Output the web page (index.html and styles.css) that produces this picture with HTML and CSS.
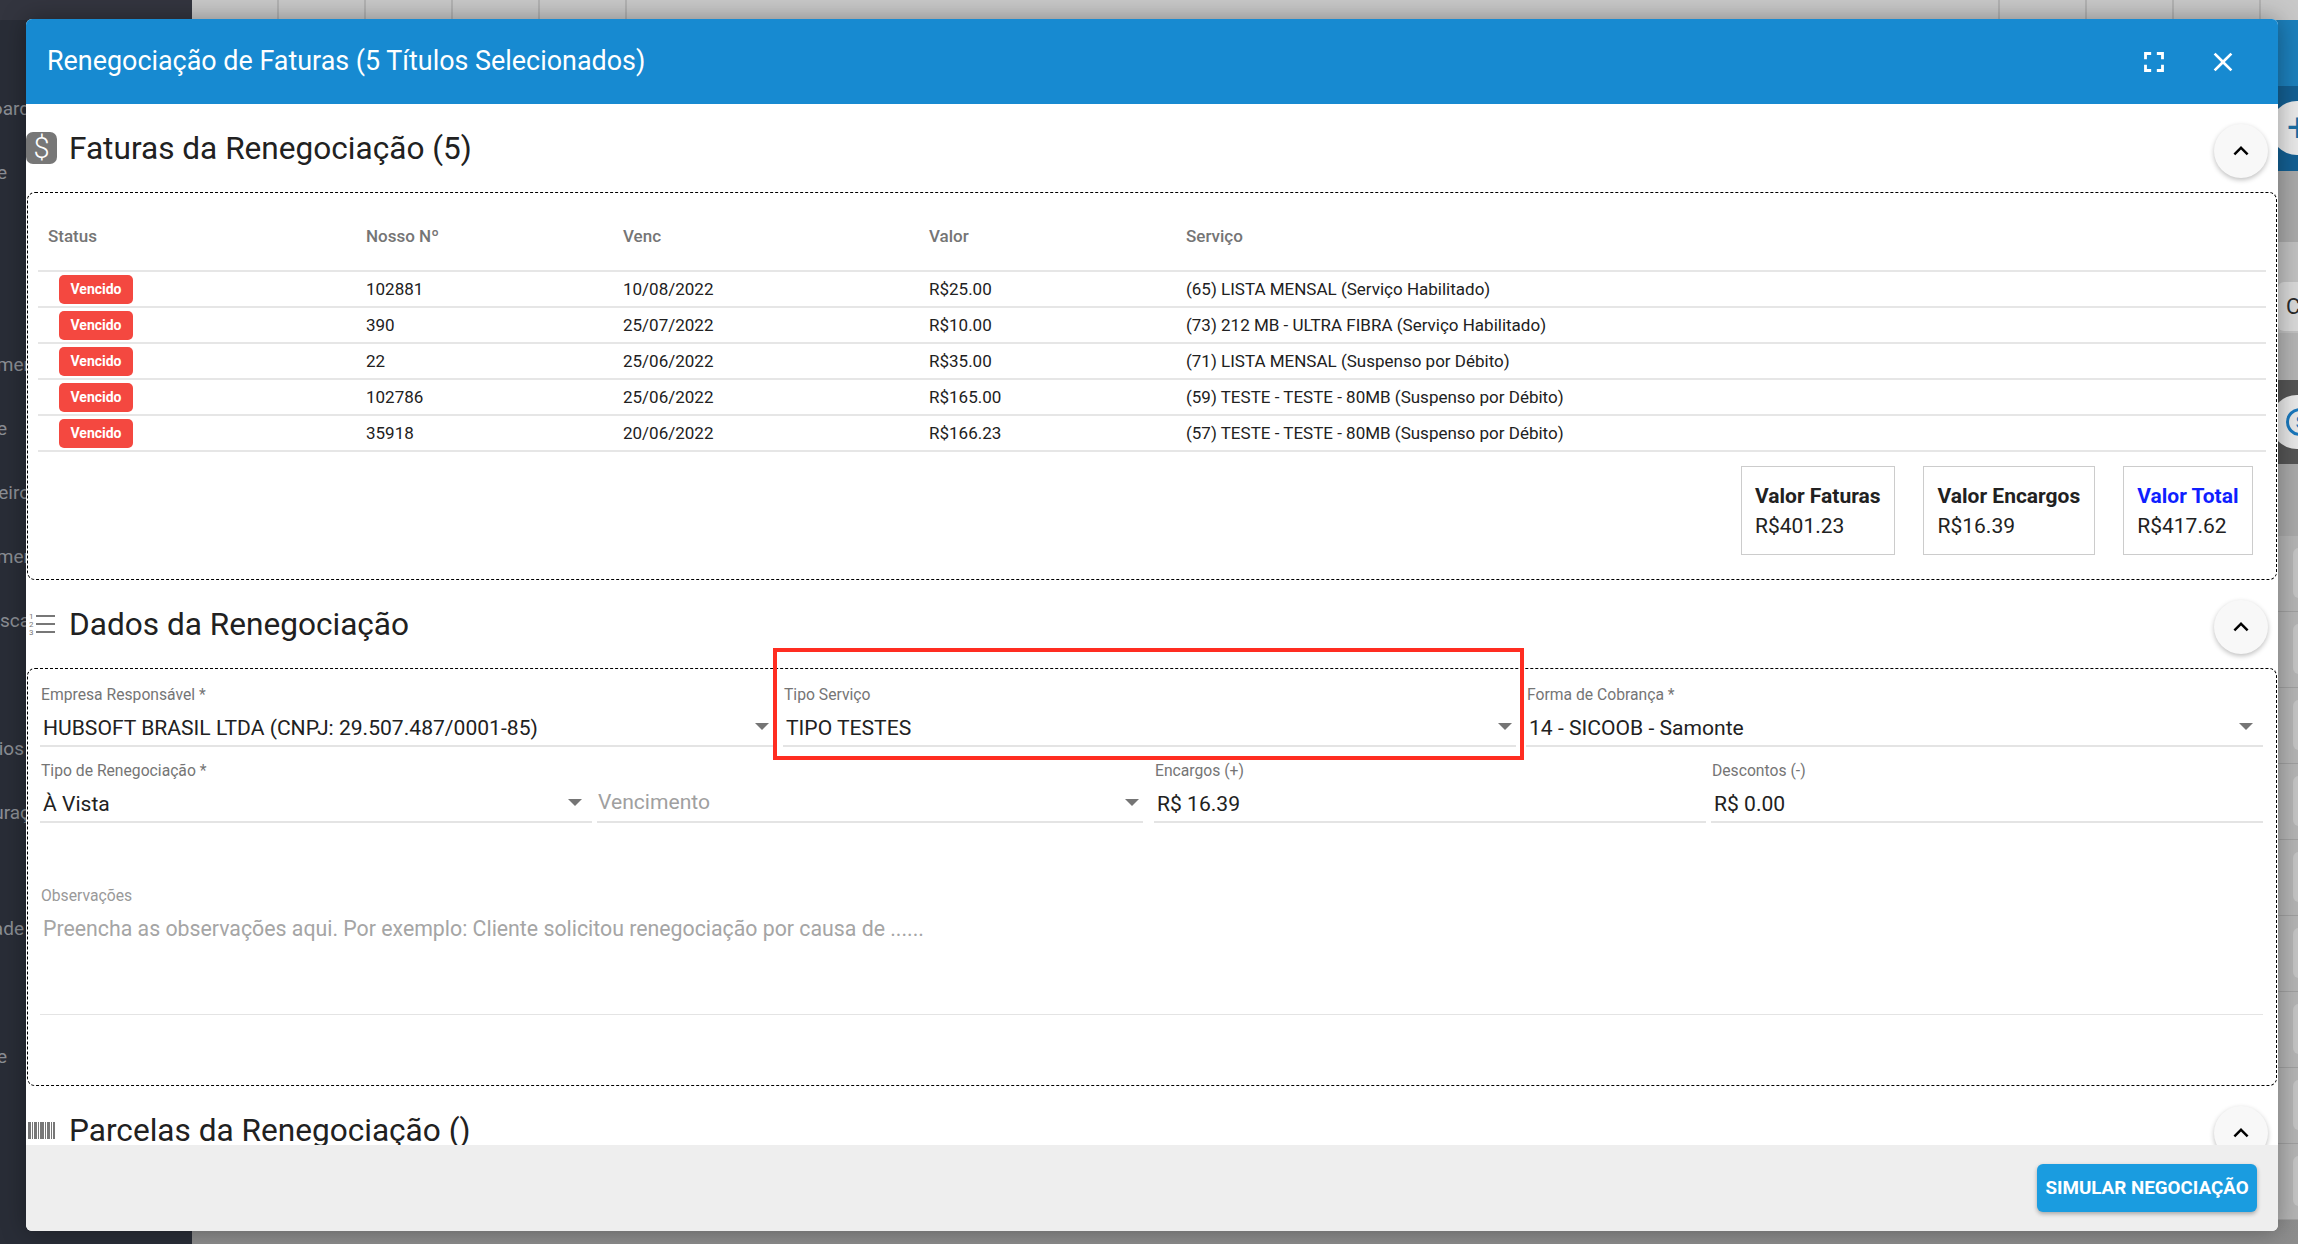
FILE: index.html
```html
<!DOCTYPE html>
<html lang="pt-BR">
<head>
    <meta charset="UTF-8">
    <title>Renegociação de Faturas</title>
    <link rel="stylesheet" href="styles.css">
</head>
<body>
    <div class="page">
        <!-- Dimmed application behind the dialog -->
        <div class="app">
            <aside class="sidebar">
                <div class="sidebar-top"></div>
                <nav class="nav">
                    <div class="nav-item">board</div>
                    <div class="nav-item nav-end">e</div>
                    <div class="nav-item"></div>
                    <div class="nav-item"></div>
                    <div class="nav-item">mer</div>
                    <div class="nav-item nav-end">e</div>
                    <div class="nav-item">ceiro</div>
                    <div class="nav-item">mer</div>
                    <div class="nav-item">sca</div>
                    <div class="nav-item"></div>
                    <div class="nav-item nav-mid">rios</div>
                    <div class="nav-item">uraç</div>
                    <div class="nav-item nav-short"></div>
                    <div class="nav-item nav-mid">ade</div>
                    <div class="nav-item"></div>
                    <div class="nav-item nav-end">e</div>
                </nav>
            </aside>
            <main class="backdrop">
                <div class="top-cells">
                    <span></span><span></span><span></span><span></span><span></span>
                    <span class="top-spacer"></span>
                    <span></span><span></span><span></span><span></span>
                </div>
                <div class="bg-band band-blue"></div>
                <div class="bg-band band-navy"><span class="bg-circle circle-plus">+</span></div>
                <div class="bg-band band-gray"></div>
                <div class="bg-band band-light"><span class="bg-chip">C</span></div>
                <div class="bg-band band-gap"></div>
                <div class="bg-band band-dark"><span class="bg-circle"><span class="money-ring">$</span></span></div>
                <div class="bg-band band-head"></div>
                <div class="bg-row"></div>
                <div class="bg-row"></div>
                <div class="bg-row"></div>
                <div class="bg-row"></div>
                <div class="bg-row"></div>
                <div class="bg-row"></div>
                <div class="bg-row"></div>
                <div class="bg-row"></div>
                <div class="bg-row"></div>
            </main>
        </div>

        <!-- Dialog -->
        <div class="modal">
            <header class="modal-header">
                <h1 class="modal-title">Renegociação de Faturas (5 Títulos Selecionados)</h1>
                <div class="modal-actions">
                    <button class="icon-btn" type="button" aria-label="Tela cheia">
                        <svg viewBox="0 0 24 24" width="34" height="34"><path d="M7 14H5v5h5v-2H7v-3zm-2-4h2V7h3V5H5v5zm12 7h-3v2h5v-5h-2v3zM14 5v2h3v3h2V5h-5z"/></svg>
                    </button>
                    <button class="icon-btn" type="button" aria-label="Fechar">
                        <svg viewBox="0 0 24 24" width="32" height="32"><path d="M19 6.41L17.59 5 12 10.59 6.41 5 5 6.41 10.59 12 5 17.59 6.41 19 12 13.41 17.59 19 19 17.59 13.41 12z"/></svg>
                    </button>
                </div>
            </header>

            <div class="modal-body">
                <!-- Faturas -->
                <section>
                    <div class="section-head">
                        <span class="section-icon icon-money">$</span>
                        <h2>Faturas da Renegociação (5)</h2>
                        <button class="collapse-btn" type="button" aria-label="Recolher">
                            <svg viewBox="0 0 24 24" width="30" height="30"><path d="M12 8l-6 6 1.41 1.41L12 10.83l4.59 4.58L18 14z"/></svg>
                        </button>
                    </div>
                    <div class="section-box box-invoices">
                        <table class="invoices">
                            <thead>
                                <tr>
                                    <th class="col-status">Status</th>
                                    <th class="col-number">Nosso Nº</th>
                                    <th class="col-due">Venc</th>
                                    <th class="col-value">Valor</th>
                                    <th>Serviço</th>
                                </tr>
                            </thead>
                            <tbody>
                                <tr>
                                    <td><span class="badge">Vencido</span></td>
                                    <td>102881</td>
                                    <td>10/08/2022</td>
                                    <td>R$25.00</td>
                                    <td>(65) LISTA MENSAL (Serviço Habilitado)</td>
                                </tr>
                                <tr>
                                    <td><span class="badge">Vencido</span></td>
                                    <td>390</td>
                                    <td>25/07/2022</td>
                                    <td>R$10.00</td>
                                    <td>(73) 212 MB - ULTRA FIBRA (Serviço Habilitado)</td>
                                </tr>
                                <tr>
                                    <td><span class="badge">Vencido</span></td>
                                    <td>22</td>
                                    <td>25/06/2022</td>
                                    <td>R$35.00</td>
                                    <td>(71) LISTA MENSAL (Suspenso por Débito)</td>
                                </tr>
                                <tr>
                                    <td><span class="badge">Vencido</span></td>
                                    <td>102786</td>
                                    <td>25/06/2022</td>
                                    <td>R$165.00</td>
                                    <td>(59) TESTE - TESTE - 80MB (Suspenso por Débito)</td>
                                </tr>
                                <tr>
                                    <td><span class="badge">Vencido</span></td>
                                    <td>35918</td>
                                    <td>20/06/2022</td>
                                    <td>R$166.23</td>
                                    <td>(57) TESTE - TESTE - 80MB (Suspenso por Débito)</td>
                                </tr>
                            </tbody>
                        </table>
                        <div class="totals">
                            <div class="total-box">
                                <strong>Valor Faturas</strong>
                                <span>R$401.23</span>
                            </div>
                            <div class="total-box">
                                <strong>Valor Encargos</strong>
                                <span>R$16.39</span>
                            </div>
                            <div class="total-box total-main">
                                <strong>Valor Total</strong>
                                <span>R$417.62</span>
                            </div>
                        </div>
                    </div>
                </section>

                <!-- Dados -->
                <section>
                    <div class="section-head">
                        <span class="section-icon icon-list">
                            <svg viewBox="0 0 27 22" width="27" height="22">
                                <text x="0" y="6" class="list-digit">1</text>
                                <text x="0" y="14" class="list-digit">2</text>
                                <text x="0" y="22" class="list-digit">3</text>
                                <rect x="7" y="2" width="19" height="2"/>
                                <rect x="7" y="10" width="19" height="2"/>
                                <rect x="7" y="18" width="19" height="2"/>
                            </svg>
                        </span>
                        <h2>Dados da Renegociação</h2>
                        <button class="collapse-btn" type="button" aria-label="Recolher">
                            <svg viewBox="0 0 24 24" width="30" height="30"><path d="M12 8l-6 6 1.41 1.41L12 10.83l4.59 4.58L18 14z"/></svg>
                        </button>
                    </div>
                    <div class="section-box box-form">
                        <div class="form-row row-three">
                            <div class="field">
                                <label>Empresa Responsável *</label>
                                <div class="control">HUBSOFT BRASIL LTDA (CNPJ: 29.507.487/0001-85)<i class="arrow"></i></div>
                            </div>
                            <div class="field">
                                <label>Tipo Serviço</label>
                                <div class="control">TIPO TESTES<i class="arrow"></i></div>
                            </div>
                            <div class="field field-far">
                                <label>Forma de Cobrança *</label>
                                <div class="control">14 - SICOOB - Samonte<i class="arrow"></i></div>
                            </div>
                        </div>
                        <div class="form-row row-four">
                            <div class="field field-far">
                                <label>Tipo de Renegociação *</label>
                                <div class="control">À Vista<i class="arrow"></i></div>
                            </div>
                            <div class="field field-date">
                                <label></label>
                                <div class="control control-empty">Vencimento<i class="arrow"></i></div>
                            </div>
                            <div class="field">
                                <label>Encargos (+)</label>
                                <div class="control">R$ 16.39</div>
                            </div>
                            <div class="field">
                                <label>Descontos (-)</label>
                                <div class="control">R$ 0.00</div>
                            </div>
                        </div>
                        <div class="field field-notes">
                            <label>Observações</label>
                            <div class="notes">Preencha as observações aqui. Por exemplo: Cliente solicitou renegociação por causa de ......</div>
                        </div>
                    </div>
                </section>

                <!-- Parcelas -->
                <section>
                    <div class="section-head">
                        <span class="section-icon icon-barcode">
                            <svg viewBox="0 0 27 17" width="27" height="17">
                                <rect x="0" width="3" height="17"/>
                                <rect x="4" width="1" height="17"/>
                                <rect x="6" width="3" height="17"/>
                                <rect x="10" width="1" height="17"/>
                                <rect x="12" width="4" height="17"/>
                                <rect x="17" width="1" height="17"/>
                                <rect x="19" width="3" height="17"/>
                                <rect x="23" width="1" height="17"/>
                                <rect x="25" width="2" height="17"/>
                            </svg>
                        </span>
                        <h2>Parcelas da Renegociação ()</h2>
                        <button class="collapse-btn" type="button" aria-label="Recolher">
                            <svg viewBox="0 0 24 24" width="30" height="30"><path d="M12 8l-6 6 1.41 1.41L12 10.83l4.59 4.58L18 14z"/></svg>
                        </button>
                    </div>
                </section>
            </div>

            <footer class="modal-footer">
                <button class="btn-primary" type="button">SIMULAR NEGOCIAÇÃO</button>
            </footer>
        </div>

        <!-- Red highlight drawn over the screenshot -->
        <div class="highlight"></div>
    </div>
</body>
</html>
```

FILE: styles.css
```css
* {
    box-sizing: border-box;
}

body {
    margin: 0;
    font-family: Roboto, "Liberation Sans", sans-serif;
    color: #212121;
}

.page {
    position: relative;
    width: 2298px;
    height: 1244px;
    overflow: hidden;
}

/* Background application */
.app {
    display: flex;
    height: 100%;
}

.sidebar {
    width: 192px;
    flex-shrink: 0;
    background-color: #292d37;
    overflow: hidden;
}

.sidebar-top {
    height: 20px;
    background-color: #33353f;
}

.nav {
    padding-top: 56px;
}

.nav-item {
    display: flex;
    justify-content: flex-end;
    width: 30px;
    height: 64px;
    align-items: center;
    font-size: 19px;
    color: #8b8e94;
    white-space: nowrap;
}

.nav-mid {
    width: 24px;
}

.nav-end {
    width: 7px;
}

.nav-short {
    height: 52px;
}

.backdrop {
    flex: 1;
    background: linear-gradient(to bottom, #a8a8a8, #8d8d8d);
}

.top-cells {
    display: flex;
    height: 20px;
    background-color: #c8c8c8;
}

.top-cells span {
    width: 87px;
    border-right: 2px solid #b2b2b2;
}

.top-cells .top-spacer {
    width: 1373px;
}

.bg-band {
    position: relative;
    overflow: hidden;
}

.band-blue {
    height: 66px;
    background-color: #1c7fbb;
}

.band-navy {
    height: 85px;
    background-color: #135f92;
}

.band-gray {
    height: 71px;
    background-color: #a9a9a9;
}

.band-light {
    height: 91px;
    background-color: #c0c0c0;
}

.band-gap {
    height: 47px;
    background-color: #b4b4b4;
}

.band-dark {
    height: 84px;
    background-color: #555;
}

.band-head {
    height: 72px;
    background-color: #a9a9a9;
}

.bg-row {
    position: relative;
    height: 76px;
    border-bottom: 1px solid #a0a0a0;
    background-color: #b4b4b4;
}

.bg-row::after {
    content: "";
    position: absolute;
    left: 2101px;
    top: 12px;
    width: 30px;
    height: 50px;
    border-radius: 6px;
    background-color: #c4c4c4;
}

.bg-circle {
    position: absolute;
    left: 2078px;
    top: 15px;
    display: flex;
    align-items: center;
    width: 54px;
    height: 54px;
    padding-left: 16px;
    border-radius: 50%;
    background-color: #e8e8e8;
}

.circle-plus {
    padding-left: 17px;
    font-size: 38px;
    color: #1c6fa4;
}

.money-ring {
    display: flex;
    align-items: center;
    justify-content: center;
    flex-shrink: 0;
    width: 28px;
    height: 28px;
    border: 3px solid #1a78bd;
    border-radius: 50%;
    font-size: 16px;
    color: #1a78bd;
}

.bg-chip {
    position: absolute;
    left: 2086px;
    top: 40px;
    display: flex;
    align-items: center;
    width: 40px;
    height: 49px;
    padding-left: 8px;
    border-radius: 6px;
    background-color: #d8d8d8;
    font-size: 22px;
    color: #2a2a2a;
}

/* Dialog */
.modal {
    position: absolute;
    left: 26px;
    top: 19px;
    display: flex;
    flex-direction: column;
    width: 2252px;
    height: 1212px;
    border-radius: 6px;
    background-color: #fff;
    box-shadow: 0 0 24px rgba(0, 0, 0, 0.35);
    overflow: hidden;
}

.modal-header {
    display: flex;
    align-items: center;
    justify-content: space-between;
    height: 85px;
    flex-shrink: 0;
    padding: 0 39px 0 21px;
    background-color: #178ad1;
    color: #fff;
}

.modal-title {
    margin: 0 0 2px;
    font-size: 26.9px;
    font-weight: 400;
}

.modal-actions {
    display: flex;
    align-items: center;
    gap: 36px;
}

.icon-btn {
    display: flex;
    padding: 0;
    border: none;
    background: none;
}

.icon-btn svg {
    fill: #fff;
}

.modal-body {
    flex: 1;
    overflow: hidden;
}

.modal-footer {
    display: flex;
    align-items: center;
    justify-content: flex-end;
    height: 86px;
    flex-shrink: 0;
    padding: 0 21px 0 0;
    background-color: #eee;
}

.btn-primary {
    height: 48px;
    width: 220px;
    padding: 0;
    border: none;
    border-radius: 6px;
    background-color: #1a9ce0;
    color: #fff;
    font-family: inherit;
    font-size: 18.8px;
    font-weight: 700;
    white-space: nowrap;
    box-shadow: 0 2px 4px rgba(0, 0, 0, 0.3);
}

/* Sections */
.section-head {
    position: relative;
    display: flex;
    align-items: center;
    height: 88px;
    padding-right: 10px;
}

.section-head h2 {
    flex: 1;
    margin: 0 0 0 12px;
    font-size: 31.6px;
    font-weight: 400;
}

.section-icon {
    display: flex;
    align-items: center;
    justify-content: center;
    width: 31px;
    height: 32px;
    flex-shrink: 0;
}

.icon-money {
    border-radius: 7px;
    background-color: #777;
    color: #fff;
    font-size: 29px;
    font-weight: 300;
}

.icon-list {
    margin-left: 1px;
    margin-right: -1px;
}

.icon-list svg,
.icon-barcode svg {
    fill: #777;
}

.list-digit {
    font-family: Roboto, sans-serif;
    font-size: 8px;
}

.collapse-btn {
    display: flex;
    align-items: center;
    justify-content: center;
    width: 54px;
    height: 54px;
    margin-top: 5px;
    padding: 0;
    border: none;
    border-radius: 50%;
    background-color: #f8f8f8;
    box-shadow: 0 2px 5px rgba(0, 0, 0, 0.25);
}

.section-box {
    margin: 0 1px 0 1px;
    border: 1px dashed #000;
    border-radius: 8px;
}

.box-invoices {
    height: 388px;
    padding: 0 10px;
}

.box-form {
    height: 418px;
    padding: 16px 13px 0 12px;
}

/* Invoices table */
.invoices {
    width: 100%;
    border-collapse: collapse;
    table-layout: fixed;
    font-size: 17px;
}

.invoices th {
    height: 78px;
    padding: 8px 0 0 10px;
    border-bottom: 2px solid #e6e6e6;
    text-align: left;
    font-weight: 500;
    color: #757575;
}

.invoices td {
    height: 36px;
    padding: 0 0 0 10px;
    border-bottom: 2px solid #e6e6e6;
    color: #212121;
}

.col-status {
    width: 318px;
}

.col-number {
    width: 257px;
}

.col-due {
    width: 306px;
}

.col-value {
    width: 257px;
}

.badge {
    display: block;
    width: 74px;
    height: 29px;
    margin: 1px 0 0 11px;
    border-radius: 5px;
    background-color: #f44840;
    color: #fff;
    font-size: 14px;
    font-weight: 700;
    line-height: 29px;
    text-align: center;
}

.totals {
    display: flex;
    justify-content: flex-end;
    gap: 28px;
    margin-top: 14px;
    padding-right: 13px;
}

.total-box {
    display: flex;
    flex-direction: column;
    justify-content: center;
    gap: 6px;
    height: 89px;
    padding: 0 13.5px;
    border: 1px solid #ccc;
    font-size: 21px;
}

.total-box strong {
    font-weight: 700;
}

.total-main strong {
    color: #0f1fff;
}

/* Form */
.form-row {
    display: grid;
    column-gap: 5px;
}

.row-three {
    grid-template-columns: 733px 733px 1fr;
    column-gap: 10px;
    margin-bottom: 14px;
}

.row-four {
    grid-template-columns: 552px 552px 552px 1fr;
}

.field label {
    display: block;
    height: 18px;
    padding-left: 1px;
    font-size: 15.7px;
    line-height: 20px;
    color: #757575;
}

.control {
    position: relative;
    display: flex;
    align-items: center;
    height: 44px;
    padding: 6px 0 0 3px;
    border-bottom: 2px solid #e4e4e4;
    font-size: 21.1px;
    color: #212121;
}

.control-empty {
    padding: 2px 0 0 1px;
    color: #a0a0a0;
}

.arrow {
    position: absolute;
    right: 4px;
    top: 20px;
    border-left: 7px solid transparent;
    border-right: 7px solid transparent;
    border-top: 7px solid #757575;
}

.field-far .arrow {
    right: 10px;
}

.field-date {
    margin-right: 6px;
}

.field-notes {
    margin-top: 63px;
}

.field-notes label {
    color: #999;
}

.notes {
    height: 111px;
    padding: 12px 0 0 3px;
    border-bottom: 1px solid #e4e4e4;
    font-size: 21.3px;
    color: #a5a5a5;
}

/* Annotation */
.highlight {
    position: absolute;
    left: 773px;
    top: 648px;
    width: 751px;
    height: 112px;
    border: 4px solid #ff2d21;
}
```
